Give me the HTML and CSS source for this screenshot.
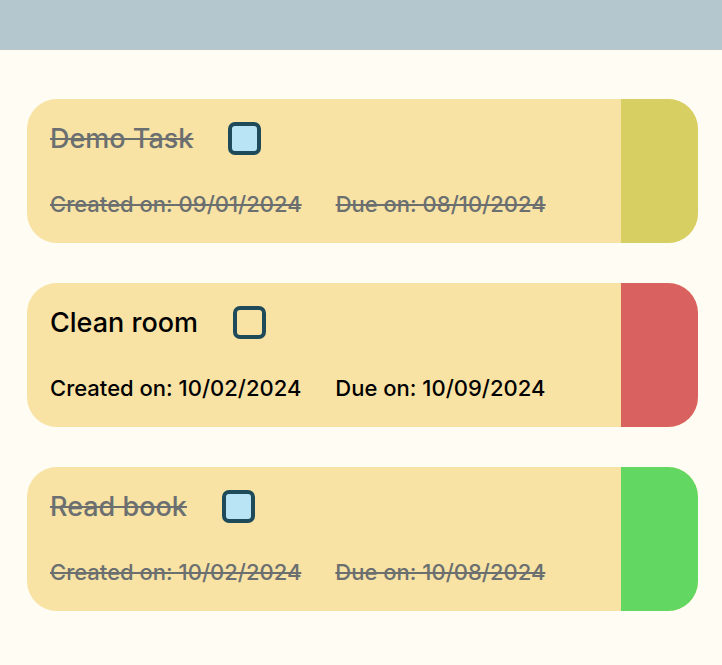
FILE: index.html
```html
<!DOCTYPE html>
<html>
<head>
<meta charset="utf-8">
<link rel="stylesheet" href="styles.css">
</head>
<body>
<header class="topbar"></header>
<main class="list">
  <div class="card done">
    <div class="card-body">
      <div class="title-row">
        <span class="title">Demo Task</span>
        <span class="check checked"></span>
      </div>
      <div class="dates">
        <span>Created on: 09/01/2024</span>
        <span>Due on: 08/10/2024</span>
      </div>
    </div>
    <div class="stripe yellow"></div>
  </div>
  <div class="card">
    <div class="card-body">
      <div class="title-row">
        <span class="title">Clean room</span>
        <span class="check"></span>
      </div>
      <div class="dates">
        <span>Created on: 10/02/2024</span>
        <span>Due on: 10/09/2024</span>
      </div>
    </div>
    <div class="stripe red"></div>
  </div>
  <div class="card done">
    <div class="card-body">
      <div class="title-row">
        <span class="title">Read book</span>
        <span class="check checked"></span>
      </div>
      <div class="dates">
        <span>Created on: 10/02/2024</span>
        <span>Due on: 10/08/2024</span>
      </div>
    </div>
    <div class="stripe green"></div>
  </div>
</main>
</body>
</html>
```

FILE: styles.css
```css
* { box-sizing: border-box; }
html, body { margin: 0; padding: 0; }
body {
  background: #fffcf4;
  font-family: Inter, "Noto Sans", sans-serif;
  color: #000;
}
.topbar {
  height: 50px;
  background: #b4c7ce;
}
.list {
  display: flex;
  flex-direction: column;
  gap: 40px;
  padding: 49px 24px 0 27px;
}
.card {
  display: flex;
  height: 144px;
  border-radius: 30px;
  overflow: hidden;
  background: #f8e3a4;
}
.card-body {
  flex: 1;
  padding: 21px 23px 0 23px;
}
.stripe { width: 77px; }
.stripe.yellow { background: #d7cf62; }
.stripe.red { background: #d96260; }
.stripe.green { background: #62d762; }
.title-row {
  display: flex;
  align-items: center;
  gap: 35px;
  height: 36px;
}
.title {
  font-size: 27px;
  font-weight: 500;
}
.check {
  width: 33px;
  height: 33px;
  border: 4px solid #1e4a5a;
  border-radius: 7px;
}
.check.checked { background: #b8e4f6; }
.dates {
  display: flex;
  gap: 34px;
  margin-top: 35px;
  font-size: 22px;
  font-weight: 500;
  line-height: 26px;
}
.done .title, .done .dates {
  color: #6b6f70;
  text-decoration: line-through;
}
```
